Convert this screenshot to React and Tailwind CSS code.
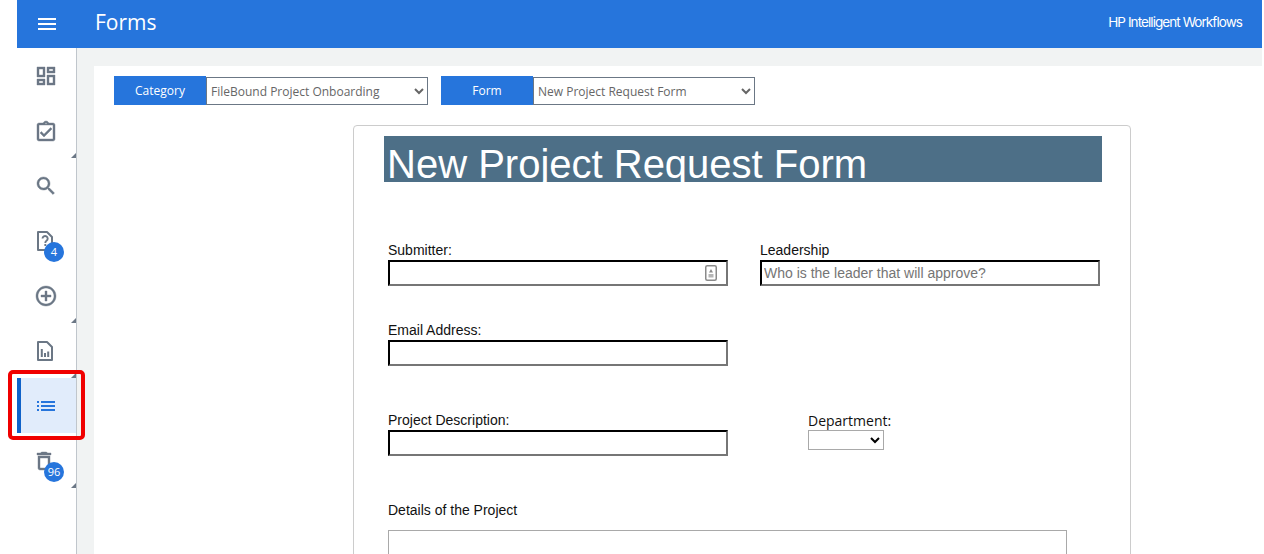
import React from 'react';
import { MdMenu, MdList } from 'react-icons/md';

// material outline icons, drawn a touch heavier than the package versions
const Heavy = ({ d, className }) => (
  <svg className={className} width="24" height="24" viewBox="0 0 24 24" fill="currentColor" stroke="currentColor" strokeWidth="0.4">
    <path d={d} />
  </svg>
);

const HelpFile = () => (
  <svg width="24" height="24" viewBox="0 0 24 24" fill="none" stroke="currentColor" strokeWidth="2">
    <path d="M4 3h9l5 5v13H4z" strokeLinejoin="round" />
    <path d="M8.500 9.500a2.600 2.600 0 1 1 4 2.300c-.9.6-1.200 1.100-1.200 2.200" strokeWidth="1.900" />
    <path d="M11.300 15v2" strokeWidth="1.900" />
  </svg>
);

const ChartFile = () => (
  <svg width="24" height="24" viewBox="0 0 24 24" fill="none" stroke="currentColor" strokeWidth="2">
    <path d="M4 3h9l5 5v13H4z" strokeLinejoin="round" />
    <path d="M7.800 10v8M11 14v4M14.200 12.500V18" />
  </svg>
);

const navItems = [
  { id: 'dashboard', icon: <Heavy d="M19 5v2h-4V5h4M9 5v6H5V5h4m10 8v6h-4v-6h4M9 17v2H5v-2h4M21 3h-8v6h8V3zM11 3H3v10h8V3zm10 8h-8v10h8V11zm-10 4H3v6h8v-6z" /> },
  { id: 'tasks', icon: <Heavy className="mt-[2px]" d="M18 9l-1.410-1.420L10 14.170l-2.590-2.580L6 13l4 4zm1-6h-4.180C14.400 1.840 13.300 1 12 1c-1.300 0-2.400.84-2.820 2H5c-1.100 0-2 .9-2 2v14c0 1.100.9 2 2 2h14c1.100 0 2-.9 2-2V5c0-1.100-.9-2-2-2zm-7-.25c.41 0 .75.34.75.75s-.34.75-.75.75-.75-.34-.75-.75.34-.75.75-.75zM19 19H5V5h14v14z" />, corner: true },
  { id: 'search', icon: <Heavy d="M15.500 14h-.79l-.28-.27C15.410 12.590 16 11.110 16 9.500 16 5.910 13.090 3 9.500 3S3 5.910 3 9.500 5.910 16 9.500 16c1.610 0 3.090-.59 4.230-1.570l.27.28v.79l5 4.990L20.490 19l-4.990-5zm-6 0C7.010 14 5 11.990 5 9.500S7.010 5 9.500 5 14 7.010 14 9.500 11.990 14 9.500 14z" /> },
  { id: 'help', icon: <HelpFile />, badge: '4' },
  { id: 'add', icon: <Heavy d="M13 7h-2v4H7v2h4v4h2v-4h4v-2h-4V7zm-1-5C6.480 2 2 6.480 2 12s4.480 10 10 10 10-4.480 10-10S17.520 2 12 2zm0 18c-4.410 0-8-3.590-8-8s3.590-8 8-8 8 3.590 8 8-3.590 8-8 8z" />, corner: true },
  { id: 'reports', icon: <ChartFile />, corner: true },
  { id: 'forms', icon: <MdList size={24} />, active: true },
  { id: 'trash', icon: <Heavy className="mr-1 mt-[1px]" d="M6 19c0 1.100.9 2 2 2h8c1.100 0 2-.9 2-2V7H6v12zM8 9h8v10H8V9zm7.500-5l-1-1h-5l-1 1H5v2h14V4z" />, badge: '96', corner: true },
];

const NavItem = ({ icon, badge, corner, active }) => (
  <div className={`relative flex h-[55px] items-center justify-center ${active ? 'border-l-4 border-[#0f62c9] bg-[#e1ecfb] pr-[5px] text-[#2675dc]' : 'pr-[1px] text-[#6b7785]'}`}>
    {icon}
    {badge && (
      <span className="absolute left-[27px] top-[29px] flex h-5 w-5 items-center justify-center rounded-full bg-[#2675dc] text-[11px] text-white">
        {badge}
      </span>
    )}
    {corner && (
      <span className="absolute bottom-0 right-0 h-0 w-0 border-b-[5px] border-l-[5px] border-b-[#6b7785] border-l-transparent" />
    )}
  </div>
);

const FilterSelect = ({ label, value, width }) => (
  <div className="flex h-[29px] items-stretch">
    <div className="flex w-[92px] items-center justify-center bg-[#2675dc] text-xs font-medium text-white">{label}</div>
    <select
      defaultValue={value}
      className={`${width} mt-px border border-[#6b7785] bg-white text-xs text-[#666]`}
    >
      <option>{value}</option>
    </select>
  </div>
);

const TextBox = ({ label, placeholder, icon }) => (
  <div className="w-[340px]">
    <div className="h-[17px] text-sm leading-[17px] text-[#111]">{label}</div>
    <div className="relative mt-[1px] h-[26px]">
      <input
        placeholder={placeholder}
        className="h-full w-full border-2 border-t-black border-l-black border-r-[#767676] border-b-[#767676] bg-white px-[2px] text-sm placeholder:text-[#757575]"
      />
      {icon && (
        <svg className="absolute right-[11px] top-[5px]" width="12" height="16" viewBox="0 0 12 16" fill="none">
          <rect x="0.750" y="0.750" width="10.500" height="14.500" rx="1.500" stroke="#8a8a8a" strokeWidth="1.500" />
          <path d="M6 4l2 3.500H4z" fill="#8a8a8a" />
          <path d="M3.500 9h5v3.500h-5z" fill="#b5b5b5" />
        </svg>
      )}
    </div>
  </div>
);

export default function App() {
  return (
    <div className="h-[554px] w-[1264px] overflow-hidden bg-white pl-[17px] pr-[2px] font-['Open_Sans',sans-serif]">
      {/* top bar */}
      <header className="flex h-12 items-center bg-[#2675dc] pb-[3px] text-white">
        <div className="flex w-[60px] justify-center pt-[3px]">
          <MdMenu size={24} />
        </div>
        <h1 className="ml-[18px] text-[21px]">Forms</h1>
        <span className="ml-auto mr-5 font-['Inter',sans-serif] text-[13.5px] tracking-[-0.93px]">HP Intelligent Workflows</span>
      </header>

      <div className="relative flex h-[506px]">
        <nav className="w-[60px] shrink-0 border-r border-[#c0c6cc] bg-white">
          {navItems.map(item => (
            <NavItem key={item.id} {...item} />
          ))}
        </nav>
        {/* red highlight round the Forms item */}
        <div className="absolute left-[-9px] top-[322px] h-[70px] w-[77px] rounded-[5px] border-[4px] border-[#f00000]" />

        <main className="flex-1 bg-[#f1f3f3] pl-[17px] pt-[18px]">
          <div className="h-full bg-white pl-5 pt-[10px]">
            <div className="flex gap-[13px]">
              <FilterSelect label="Category" value="FileBound Project Onboarding" width="w-[222px]" />
              <FilterSelect label="Form" value="New Project Request Form" width="w-[222px]" />
            </div>

            {/* form card */}
            <div className="ml-[239px] mt-5 h-[500px] w-[778px] rounded-[4px] border border-[#ccc] pl-[30px] pt-[10px] font-['Liberation_Sans',sans-serif]">
              <div className="h-[46px] w-[718px] overflow-hidden bg-[#4d6f87] pl-[3px] text-[40px] leading-[56px] text-white">
                New Project Request Form
              </div>

              <div className="ml-[4px] mt-[60px] flex gap-[32px]">
                <TextBox label="Submitter:" icon />
                <TextBox label="Leadership" placeholder="Who is the leader that will approve?" />
              </div>

              <div className="ml-[4px] mt-[36px]">
                <TextBox label="Email Address:" />
              </div>

              <div className="ml-[4px] mt-[46px] flex">
                <TextBox label="Project Description:" />
                <div className="ml-[80px]">
                  <div className="h-[17px] font-['Open_Sans',sans-serif] text-sm leading-[17px] text-[#111]">Department:</div>
                  <select className="mt-[1px] block h-5 w-[76px] border border-[#a9a9a9] bg-white text-sm">
                    <option></option>
                  </select>
                </div>
              </div>

              <div className="ml-[4px] mt-[46px] h-[17px] text-sm leading-[17px] text-[#111]">Details of the Project</div>
              <textarea className="ml-[4px] mt-[11px] block h-[80px] w-[679px] resize-none border border-[#a9a9a9]" />
            </div>
          </div>
        </main>
      </div>
    </div>
  );
}
